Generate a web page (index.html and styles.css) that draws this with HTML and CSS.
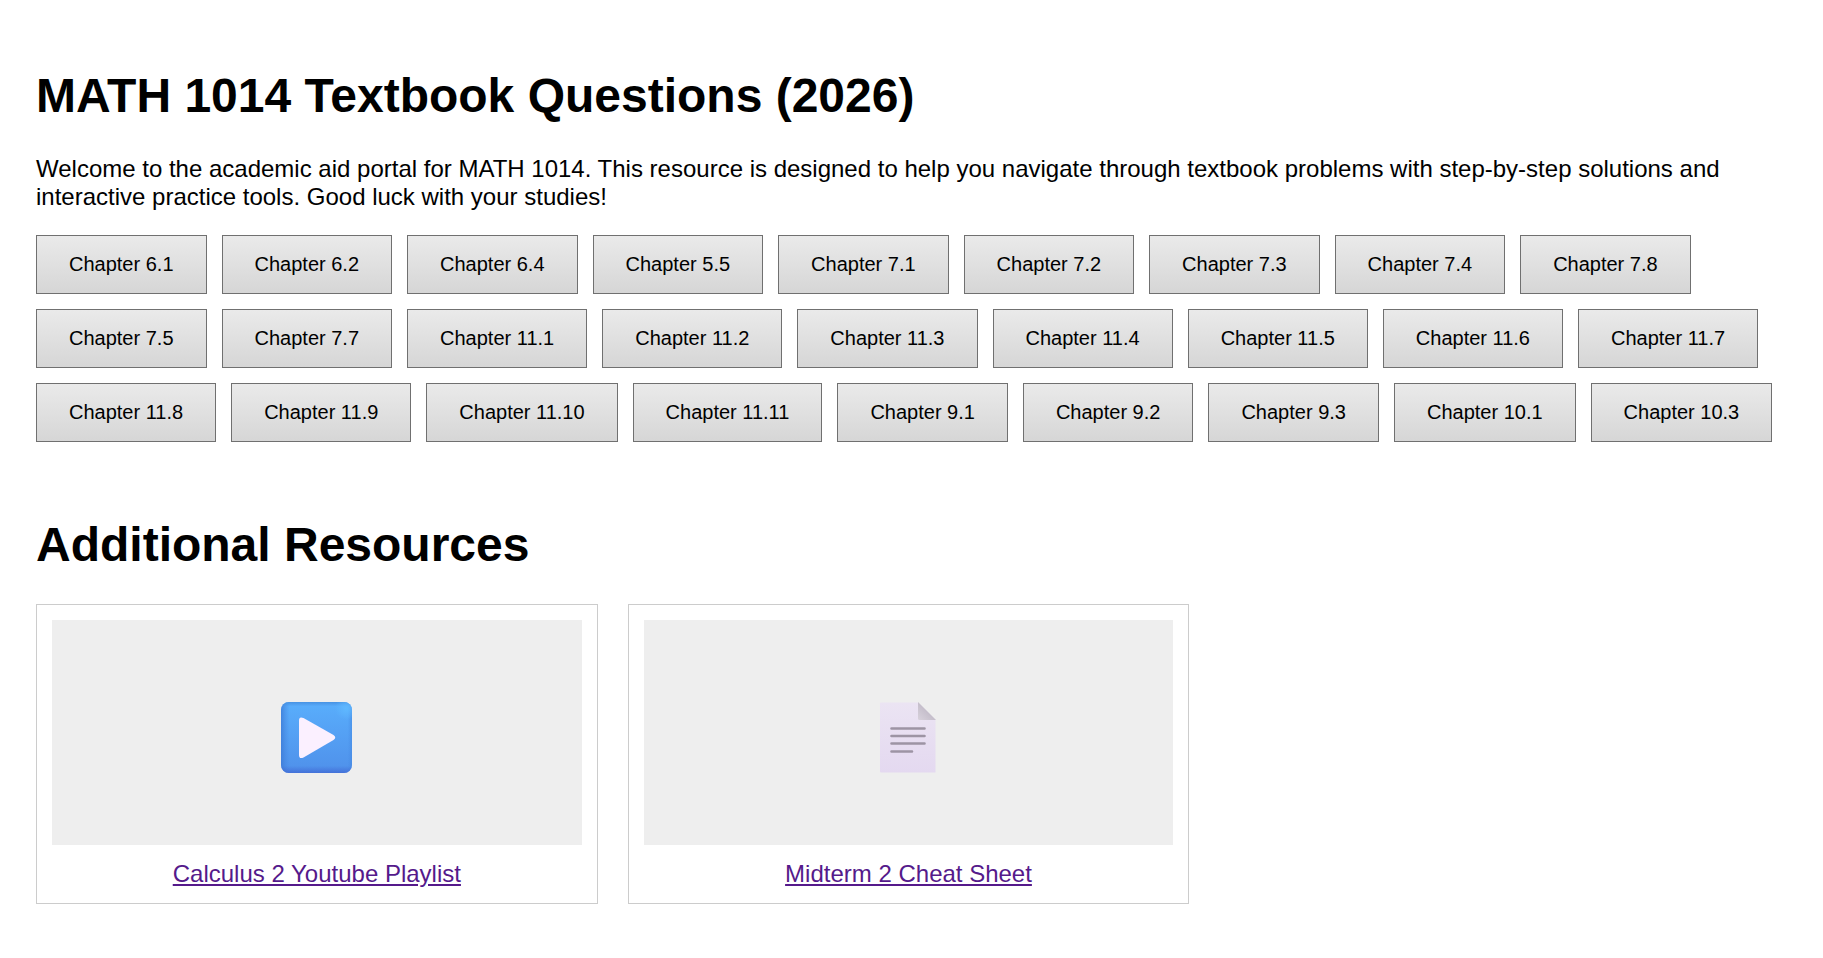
FILE: index.html
```html
<!DOCTYPE html>
<html lang="en">
<head>
<meta charset="utf-8">
<title>MATH 1014 Textbook Questions (2026)</title>
<link rel="stylesheet" href="styles.css">
</head>
<body>
<main>
  <h1 class="title">MATH 1014 Textbook Questions (2026)</h1>
  <p class="intro">Welcome to the academic aid portal for MATH 1014. This resource is designed to help you navigate through textbook problems with step-by-step solutions and interactive practice tools. Good luck with your studies!</p>
  <div class="chapters">
    <button type="button">Chapter 6.1</button>
    <button type="button">Chapter 6.2</button>
    <button type="button">Chapter 6.4</button>
    <button type="button">Chapter 5.5</button>
    <button type="button">Chapter 7.1</button>
    <button type="button">Chapter 7.2</button>
    <button type="button">Chapter 7.3</button>
    <button type="button">Chapter 7.4</button>
    <button type="button">Chapter 7.8</button>
    <button type="button">Chapter 7.5</button>
    <button type="button">Chapter 7.7</button>
    <button type="button">Chapter 11.1</button>
    <button type="button">Chapter 11.2</button>
    <button type="button">Chapter 11.3</button>
    <button type="button">Chapter 11.4</button>
    <button type="button">Chapter 11.5</button>
    <button type="button">Chapter 11.6</button>
    <button type="button">Chapter 11.7</button>
    <button type="button">Chapter 11.8</button>
    <button type="button">Chapter 11.9</button>
    <button type="button">Chapter 11.10</button>
    <button type="button">Chapter 11.11</button>
    <button type="button">Chapter 9.1</button>
    <button type="button">Chapter 9.2</button>
    <button type="button">Chapter 9.3</button>
    <button type="button">Chapter 10.1</button>
    <button type="button">Chapter 10.3</button>
  </div>
  <section class="resources">
    <h1 class="title">Additional Resources</h1>
    <div class="cards">
      <article class="card">
        <div class="thumb">
          <svg class="icon" viewBox="0 0 72 72" aria-hidden="true">
            <defs>
              <linearGradient id="face" x1="0" y1="0" x2="0" y2="1">
                <stop offset="0" stop-color="#59aefc"/>
                <stop offset="1" stop-color="#4f90ea"/>
              </linearGradient>
              <linearGradient id="left" x1="0" y1="0" x2="1" y2="0">
                <stop offset="0" stop-color="#3b78d4" stop-opacity=".75"/>
                <stop offset=".12" stop-color="#4285df" stop-opacity="0"/>
                <stop offset=".94" stop-color="#4285df" stop-opacity="0"/>
                <stop offset="1" stop-color="#4285df" stop-opacity=".5"/>
              </linearGradient>
              <linearGradient id="edge" x1="0" y1="0" x2="0" y2="1">
                <stop offset="0" stop-color="#438bdd" stop-opacity=".8"/>
                <stop offset=".06" stop-color="#438bdd" stop-opacity="0"/>
                <stop offset=".9" stop-color="#4169d4" stop-opacity="0"/>
                <stop offset="1" stop-color="#4169d4" stop-opacity=".8"/>
              </linearGradient>
              <radialGradient id="shine" cx=".92" cy=".09" r=".16">
                <stop offset="0" stop-color="#5fb8ff"/>
                <stop offset="1" stop-color="#5fb8ff" stop-opacity="0"/>
              </radialGradient>
            </defs>
            <rect y="1" width="71" height="71" rx="8" fill="url(#face)"/>
            <rect y="1" width="71" height="71" rx="8" fill="url(#left)"/>
            <rect y="1" width="71" height="71" rx="8" fill="url(#edge)"/>
            <rect y="1" width="71" height="71" rx="8" fill="url(#shine)"/>
            <path d="M18 19.500Q18 15 22.500 17L52.500 34Q56 36.500 52.500 39L22.500 56.500Q18 58.500 18 54Z" fill="#fbf0ff"/>
          </svg>
        </div>
        <a href="#playlist">Calculus 2 Youtube Playlist</a>
      </article>
      <article class="card">
        <div class="thumb">
          <svg class="icon" viewBox="0 0 72 72" aria-hidden="true">
            <defs>
              <linearGradient id="paper" x1="0" y1="0" x2="0" y2="1">
                <stop offset="0" stop-color="#ebe4f3"/>
                <stop offset="1" stop-color="#e4d9f0"/>
              </linearGradient>
              <linearGradient id="fold" x1="1" y1="0" x2="0" y2="1">
                <stop offset=".45" stop-color="#c3bcc9"/>
                <stop offset="1" stop-color="#d8d2dc"/>
              </linearGradient>
            </defs>
            <path d="M9 1.500H46L63.500 19V71.500H9Q8 71.500 8 70.500V2.500Q8 1.500 9 1.500Z" fill="url(#paper)"/>
            <path d="M46 1L64 19H47.500Q46 19 46 17.500Z" fill="url(#fold)"/>
            <path d="M19.500 27.500H52.500M19.500 35H52.500M19.500 42.500H52.500M19.500 50.500H40" fill="none" stroke="#9d94a4" stroke-width="2.600" stroke-linecap="round"/>
          </svg>
        </div>
        <a href="#cheat-sheet">Midterm 2 Cheat Sheet</a>
      </article>
    </div>
  </section>
</main>
</body>
</html>
```
FILE: styles.css
```css
body {
  margin: 0;
  padding: 36px 42px 36px 36px;
  background: #fff;
  color: #000;
  font: 24px/28px "Liberation Sans", Arial, sans-serif;
}

main {
  display: flow-root;
}

.title {
  margin: 32px 0;
  font-size: 48px;
  line-height: 55px;
}

.intro {
  margin: 0 0 24px;
}

.chapters {
  display: flex;
  flex-wrap: wrap;
  gap: 15px;
}

.chapters button {
  padding: 17px 32px 18px;
  border: 1px solid #707070;
  border-radius: 0;
  background: linear-gradient(#eaeaea, #d6d6d6);
  color: #000;
  font: 20px/22px "Liberation Sans", Arial, sans-serif;
  cursor: pointer;
}

.resources {
  display: flow-root;
  margin-top: 43px;
}

.cards {
  display: grid;
  grid-template-columns: repeat(3, 1fr);
  gap: 30px;
}

.card {
  display: flex;
  flex-direction: column;
  gap: 15px;
  padding: 15px;
  border: 1px solid #ccc;
  text-align: center;
}

.thumb {
  display: flex;
  align-items: center;
  justify-content: center;
  height: 217px;
  padding-top: 8px;
  background: #eee;
}

.icon {
  width: 72px;
  height: 72px;
}

.card a {
  align-self: center;
  color: #551a8b;
}
```
